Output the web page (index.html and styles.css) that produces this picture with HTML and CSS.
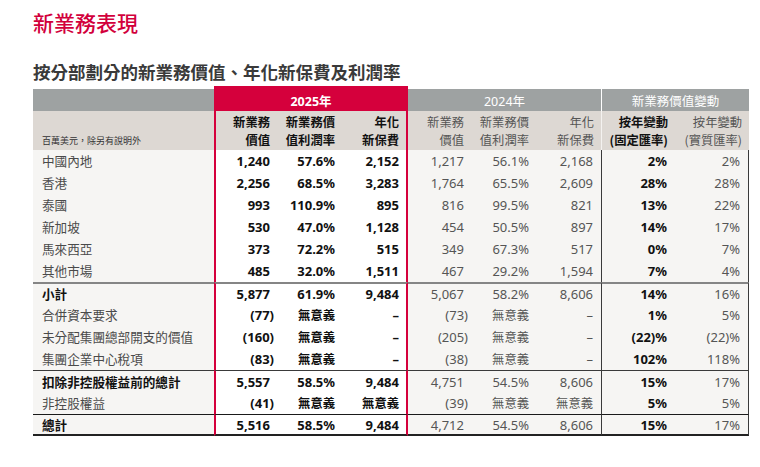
FILE: index.html
```html
<!DOCTYPE html>
<html lang="zh-Hant">
<head>
<meta charset="utf-8">
<title>新業務表現</title>
<link rel="stylesheet" href="styles.css">
</head>
<body>
<div class="page">
  <h1 class="title">新業務表現</h1>
  <h2 class="subtitle">按分部劃分的新業務價值、年化新保費及利潤率</h2>
  <table class="nbv">
    <colgroup>
      <col class="w-label">
      <col class="w-c1"><col class="w-c2"><col class="w-c3">
      <col class="w-d1"><col class="w-d2"><col class="w-d3">
      <col class="w-e1"><col class="w-e2">
    </colgroup>
    <thead>
      <tr class="band">
        <th class="band-blank"></th>
        <th colspan="3" class="band-25">2025年</th>
        <th colspan="3" class="band-24">2024年</th>
        <th colspan="2" class="band-chg">新業務價值變動</th>
      </tr>
      <tr class="heads">
        <th class="unit">百萬美元，除另有說明外</th>
        <th class="h c1 strong">新業務<br>價值</th>
        <th class="h c2 strong">新業務價<br>值利潤率</th>
        <th class="h c3 strong">年化<br>新保費</th>
        <th class="h d1">新業務<br>價值</th>
        <th class="h d2">新業務價<br>值利潤率</th>
        <th class="h d3">年化<br>新保費</th>
        <th class="h e1 strong">按年變動<br>(固定匯率)</th>
        <th class="h e2">按年變動<br>(實質匯率)</th>
      </tr>
    </thead>
    <tbody>
      <tr>
        <td class="lab">中國內地</td>
        <td class="n c1">1,240</td><td class="n c2">57.6%</td><td class="n c3">2,152</td>
        <td class="n d1">1,217</td><td class="n d2">56.1%</td><td class="n d3">2,168</td>
        <td class="n e1">2%</td><td class="n e2">2%</td>
      </tr>
      <tr>
        <td class="lab">香港</td>
        <td class="n c1">2,256</td><td class="n c2">68.5%</td><td class="n c3">3,283</td>
        <td class="n d1">1,764</td><td class="n d2">65.5%</td><td class="n d3">2,609</td>
        <td class="n e1">28%</td><td class="n e2">28%</td>
      </tr>
      <tr>
        <td class="lab">泰國</td>
        <td class="n c1">993</td><td class="n c2">110.9%</td><td class="n c3">895</td>
        <td class="n d1">816</td><td class="n d2">99.5%</td><td class="n d3">821</td>
        <td class="n e1">13%</td><td class="n e2">22%</td>
      </tr>
      <tr>
        <td class="lab">新加坡</td>
        <td class="n c1">530</td><td class="n c2">47.0%</td><td class="n c3">1,128</td>
        <td class="n d1">454</td><td class="n d2">50.5%</td><td class="n d3">897</td>
        <td class="n e1">14%</td><td class="n e2">17%</td>
      </tr>
      <tr>
        <td class="lab">馬來西亞</td>
        <td class="n c1">373</td><td class="n c2">72.2%</td><td class="n c3">515</td>
        <td class="n d1">349</td><td class="n d2">67.3%</td><td class="n d3">517</td>
        <td class="n e1">0%</td><td class="n e2">7%</td>
      </tr>
      <tr>
        <td class="lab">其他市場</td>
        <td class="n c1">485</td><td class="n c2">32.0%</td><td class="n c3">1,511</td>
        <td class="n d1">467</td><td class="n d2">29.2%</td><td class="n d3">1,594</td>
        <td class="n e1">7%</td><td class="n e2">4%</td>
      </tr>
      <tr class="sub">
        <td class="lab strong">小計</td>
        <td class="n c1">5,877</td><td class="n c2">61.9%</td><td class="n c3">9,484</td>
        <td class="n d1">5,067</td><td class="n d2">58.2%</td><td class="n d3">8,606</td>
        <td class="n e1">14%</td><td class="n e2">16%</td>
      </tr>
      <tr>
        <td class="lab">合併資本要求</td>
        <td class="n c1">(77<span class="hang">)</span></td><td class="n c2"><span class="z">無意義</span></td><td class="n c3">–</td>
        <td class="n d1">(73<span class="hang">)</span></td><td class="n d2"><span class="z">無意義</span></td><td class="n d3">–</td>
        <td class="n e1">1%</td><td class="n e2">5%</td>
      </tr>
      <tr>
        <td class="lab">未分配集團總部開支的價值</td>
        <td class="n c1">(160<span class="hang">)</span></td><td class="n c2"><span class="z">無意義</span></td><td class="n c3">–</td>
        <td class="n d1">(205<span class="hang">)</span></td><td class="n d2"><span class="z">無意義</span></td><td class="n d3">–</td>
        <td class="n e1">(22)%</td><td class="n e2">(22)%</td>
      </tr>
      <tr>
        <td class="lab">集團企業中心稅項</td>
        <td class="n c1">(83<span class="hang">)</span></td><td class="n c2"><span class="z">無意義</span></td><td class="n c3">–</td>
        <td class="n d1">(38<span class="hang">)</span></td><td class="n d2"><span class="z">無意義</span></td><td class="n d3">–</td>
        <td class="n e1">102%</td><td class="n e2">118%</td>
      </tr>
      <tr class="pre">
        <td class="lab strong">扣除非控股權益前的總計</td>
        <td class="n c1">5,557</td><td class="n c2">58.5%</td><td class="n c3">9,484</td>
        <td class="n d1">4,751</td><td class="n d2">54.5%</td><td class="n d3">8,606</td>
        <td class="n e1">15%</td><td class="n e2">17%</td>
      </tr>
      <tr>
        <td class="lab">非控股權益</td>
        <td class="n c1">(41<span class="hang">)</span></td><td class="n c2"><span class="z">無意義</span></td><td class="n c3"><span class="z">無意義</span></td>
        <td class="n d1">(39<span class="hang">)</span></td><td class="n d2"><span class="z">無意義</span></td><td class="n d3"><span class="z">無意義</span></td>
        <td class="n e1">5%</td><td class="n e2">5%</td>
      </tr>
      <tr class="total">
        <td class="lab strong">總計</td>
        <td class="n c1">5,516</td><td class="n c2">58.5%</td><td class="n c3">9,484</td>
        <td class="n d1">4,712</td><td class="n d2">54.5%</td><td class="n d3">8,606</td>
        <td class="n e1">15%</td><td class="n e2">17%</td>
      </tr>
    </tbody>
  </table>
</div>
</body>
</html>
```

FILE: styles.css
```css
html, body {
  margin: 0;
  padding: 0;
  background: #ffffff;
}

body {
  font-family: "Noto Sans", "Noto Sans CJK TC", sans-serif;
  color: #4a4a4a;
}

.page {
  padding: 10px 11px 0 33px;
}

.title {
  margin: 0;
  font-family: "Noto Sans CJK TC", sans-serif;
  font-size: 21px;
  line-height: 24px;
  font-weight: 500;
  color: #d2003c;
}

.subtitle {
  margin: 27px 0 0;
  font-family: "Noto Sans CJK TC", sans-serif;
  font-size: 17.5px;
  line-height: 22px;
  font-weight: 700;
  color: #3a3a3a;
}

.nbv {
  margin-top: 3px;
  width: 716px;
  table-layout: fixed;
  border-collapse: separate;
  border-spacing: 0;
}

.w-label { width: 181px; }
.w-c1 { width: 63px; }
.w-c2 { width: 65px; }
.w-c3 { width: 66px; }
.w-d1 { width: 63px; }
.w-d2 { width: 65px; }
.w-d3 { width: 66px; }
.w-e1 { width: 73px; }
.w-e2 { width: 74px; }

.nbv th,
.nbv td {
  box-sizing: border-box;
  padding: 0;
}

/* top band */
.band th {
  height: 25px;
  background: #9ea2a2;
  border-top: 3px solid #ffffff;
  color: #ffffff;
  font-family: "Noto Sans", "Noto Sans CJK TC", sans-serif;
  font-size: 12.5px;
  font-weight: 400;
  text-align: center;
  vertical-align: middle;
}

.band .band-25 {
  background: #d5003c;
  border-top-color: #d5003c;
  font-weight: 700;
}

.band .band-24 {
  border-right: 1px solid #ffffff;
}

/* column heading row */
.heads th {
  height: 39px;
  background: #ddd8d3;
  font-family: "Noto Sans CJK TC", sans-serif;
  font-size: 12.3px;
  line-height: 18px;
  font-weight: 400;
  color: #555555;
  text-align: right;
  vertical-align: middle;
  padding-right: 7px;
  padding-top: 1px;
}

.heads .strong {
  font-weight: 700;
  color: #111111;
}

.heads .unit {
  text-align: left;
  vertical-align: bottom;
  font-size: 9px;
  line-height: 13px;
  padding: 0 0 3px 9px;
  color: #333333;
}

.heads .d3 {
  border-right: 1px solid #f4f2f0;
}

/* body */
.nbv td {
  height: 22px;
  background: #f6f5f3;
  font-size: 13px;
  line-height: 16px;
  vertical-align: middle;
  white-space: nowrap;
}

.nbv td.lab {
  font-family: "Noto Sans CJK TC", sans-serif;
  font-size: 12.6px;
  color: #4a4a4a;
  padding-left: 9px;
}

.nbv td.lab.strong {
  font-weight: 700;
  color: #111111;
}

.nbv td.n {
  text-align: right;
  padding-right: 7px;
  color: #555555;
}

.nbv td.c1,
.nbv td.c2,
.nbv td.c3 {
  background: #ffffff;
  font-weight: 700;
  color: #111111;
}

.nbv td.e1 {
  font-weight: 700;
  color: #111111;
}

.nbv td.d3,
.nbv td.e1,
.nbv td.e2 {
  padding-right: 8px;
}

.nbv td.d3 {
  border-right: 1px solid #3a3a3a;
}

.nbv td.e2 {
  border-right: 1px solid #3a3a3a;
}

/* red 2025 frame */
.heads .c1,
.nbv td.c1 {
  border-left: 2px solid #d5003c;
}

.heads .c3,
.nbv td.c3 {
  border-right: 2px solid #d5003c;
}

.z {
  font-family: "Noto Sans CJK TC", sans-serif;
  font-size: 12.3px;
}

.hang {
  margin-right: -4px;
}

/* rule lines */
.sub td {
  border-top: 2px solid #858585;
}

.pre td {
  border-top: 1px solid #3a3a3a;
}

.total td {
  border-top: 1px solid #1a1a1a;
  border-bottom: 2px solid #222222;
}
```
